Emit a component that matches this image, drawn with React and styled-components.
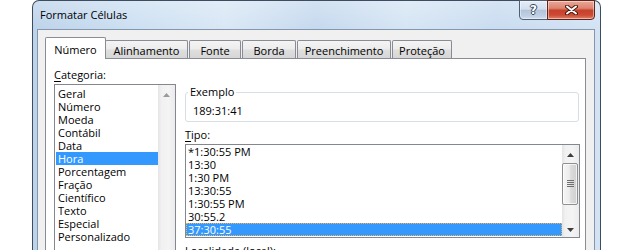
import React from "react";
import styled, { createGlobalStyle, css } from "styled-components";

const GlobalStyle = createGlobalStyle`
  html, body { margin: 0; padding: 0; background: #fff; overflow: hidden; }
  body {
    font-family: "Open Sans", "Noto Sans", sans-serif;
    font-size: 11px;
    color: #000;
  }
  * { box-sizing: border-box; }
`;

const Screen = styled.div`
  width: 630px;
  height: 250px;
  overflow: hidden;
  padding-left: 32px;
`;

const Window = styled.div`
  width: 569px;
  height: 290px;
  border: 1px solid #3d4c5e;
  border-bottom: none;
  border-radius: 7px 7px 0 0;
  padding: 0 5px 0 4px;
  display: flex;
  flex-direction: column;
  background:
    linear-gradient(180deg, rgba(255,255,255,0.25) 0px, rgba(255,255,255,0) 28px),
    linear-gradient(90deg, #bdd3ea 0%, #cde0f2 18%, #d9e7f5 34%, #c5d9ee 50%, #d6e5f4 66%, #c9dcf0 82%, #d3e3f4 100%);
`;

const TitleBar = styled.div`
  height: 28px;
  display: flex;
  justify-content: space-between;
  align-items: flex-start;
`;

const Title = styled.div`
  margin-left: 3px;
  line-height: 28px;
  font-size: 11px;
  color: #000;
`;

const CaptionGroup = styled.div`
  display: flex;
  margin-top: -1px;
`;

const CaptionButton = styled.div`
  height: 20px;
  width: ${(p) => p.$w}px;
  border: 1px solid;
  display: flex;
  align-items: center;
  justify-content: center;
  box-shadow: inset 0 0 0 1px rgba(255, 255, 255, 0.45);
  ${(p) =>
    p.$kind === "close"
      ? css`
          margin-left: -1px;
          border-color: #5e2219;
          border-radius: 0 0 4px 0;
          background: linear-gradient(180deg, #e9a898 0%, #dc8470 40%, #c7412b 52%, #cc4a33 78%, #e0836a 100%);
        `
      : css`
          border-color: #4f5f74;
          border-radius: 0 0 0 4px;
          background: linear-gradient(180deg, #e4ecf6 0%, #d3dfed 45%, #b3c4da 52%, #bfcfe3 80%, #cfdcec 100%);
        `}
`;

const HelpGlyph = styled.span`
  font-family: "DejaVu Sans", sans-serif;
  font-weight: 700;
  font-size: 12px;
  line-height: 12px;
  color: #fff;
  text-shadow: 1px 0 #34465c, -1px 0 #34465c, 0 1px #34465c, 0 -1px #34465c;
`;

const Client = styled.div`
  flex: 1;
  border: 1px solid #8596ad;
  border-bottom: none;
  background: #f0f0f0;
  padding: 0 8px 0 7px;
  display: flex;
  flex-direction: column;
`;

const TabStrip = styled.div`
  height: 28px;
  display: flex;
  align-items: flex-end;
`;

const Tab = styled.div`
  width: ${(p) => p.$w}px;
  margin-left: ${(p) => p.$ml}px;
  border: 1px solid #898c95;
  border-bottom: none;
  border-radius: 2px 2px 0 0;
  display: flex;
  align-items: center;
  justify-content: center;
  padding-top: 1px;
  position: relative;
  white-space: nowrap;
  ${(p) =>
    p.$active
      ? css`
          height: 22px;
          margin-bottom: -1px;
          background: #fff;
          z-index: 2;
        `
      : css`
          height: 18px;
          background: linear-gradient(180deg, #f4f4f4 0%, #ececec 48%, #dfdfdf 52%, #d6d6d6 100%);
          z-index: 0;
        `}
`;

const Panel = styled.div`
  flex: 1;
  position: relative;
  z-index: 1;
  border: 1px solid #898c95;
  border-bottom: none;
  background: #fff;
  display: flex;
  gap: 9px;
  padding: 8px 0 0 8px;
`;

const Column = styled.div`
  width: ${(p) => p.$w}px;
  display: flex;
  flex-direction: column;
`;

const FieldLabel = styled.div`
  height: 15px;
  line-height: 15px;
  margin-top: ${(p) => p.$mt || 0}px;
  margin-bottom: 2px;
  white-space: nowrap;
`;

const Key = styled.span`
  text-decoration: underline;
  text-underline-offset: 2px;
`;

const ListBox = styled.div`
  height: ${(p) => p.$h}px;
  flex: none;
  border: 1px solid #828790;
  background: #fff;
  display: flex;
`;

const Items = styled.div`
  flex: 1;
  padding-top: ${(p) => p.$pt}px;
  display: flex;
  flex-direction: column;
`;

const Item = styled.div`
  height: 13px;
  line-height: 13px;
  margin-left: ${(p) => p.$inset}px;
  padding-left: 2px;
  white-space: nowrap;
  ${(p) =>
    p.$selected &&
    css`
      background: #3399ff;
      color: #fff;
    `}
  ${(p) =>
    p.$focus &&
    css`
      outline: 1px dotted #f3b24a;
      outline-offset: -1px;
    `}
`;

const ScrollBar = styled.div`
  width: 17px;
  flex: none;
  display: flex;
  flex-direction: column;
  background: linear-gradient(90deg, #e4e4e4 0%, #f1f1f1 20%, #f4f4f4 60%, #ebebeb 100%);
`;

const ScrollButton = styled.div`
  height: 17px;
  flex: none;
  display: flex;
  align-items: center;
  justify-content: center;
  padding-top: 2px;
`;

const Track = styled.div`
  flex: 1;
  display: flex;
  flex-direction: column;
  padding: 1px 1px 0 0;
`;

const Thumb = styled.div`
  height: 42px;
  border: 1px solid #8e8f8f;
  border-radius: 2px;
  background: linear-gradient(90deg, #f6f6f6 0%, #ececec 45%, #dcdcdc 55%, #d0d0d0 100%);
  box-shadow: inset 0 0 0 1px rgba(255, 255, 255, 0.7);
  display: flex;
  align-items: center;
  justify-content: center;
`;

const GroupBox = styled.fieldset`
  margin: 18px 0 0 0;
  padding: 0;
  width: 394px;
  min-inline-size: 0;
  border: 1px solid #d5dfe5;
  border-radius: 3px;
`;

const Legend = styled.legend`
  margin-left: 2px;
  padding: 0 2px;
  line-height: 14px;
  font-size: 11px;
`;

const Sample = styled.div`
  padding: 4px 0 3px 7px;
  line-height: 15px;
`;

const Arrow = ({ down, color }) => (
  <svg width="7" height="4" viewBox="0 0 7 4">
    <polygon points={down ? "0,0 7,0 3.5,4" : "3.5,0 7,4 0,4"} fill={color} />
  </svg>
);

const Grip = () => (
  <svg width="7" height="8" viewBox="0 0 7 8">
    {[0, 2, 4, 6].map((y) => (
      <g key={y}>
        <rect x="0" y={y} width="7" height="1" fill="#6f6f6f" />
      </g>
    ))}
  </svg>
);

const CloseGlyph = () => (
  <svg width="13" height="10" viewBox="0 0 13 10">
    <path d="M2 1.5 L11 8.5 M11 1.5 L2 8.5" stroke="#4a1a12" strokeWidth="4" strokeLinecap="round" fill="none" />
    <path d="M2 1.5 L11 8.5 M11 1.5 L2 8.5" stroke="#ffffff" strokeWidth="2" strokeLinecap="round" fill="none" />
  </svg>
);

const tabs = [
  { label: "Número", w: 61, ml: 0, active: true },
  { label: "Alinhamento", w: 83, ml: -1 },
  { label: "Fonte", w: 52, ml: 1 },
  { label: "Borda", w: 54, ml: 1 },
  { label: "Preenchimento", w: 94, ml: 1 },
  { label: "Proteção", w: 60, ml: 1 },
];

const categories = [
  "Geral", "Número", "Moeda", "Contábil", "Data", "Hora", "Porcentagem",
  "Fração", "Científico", "Texto", "Especial", "Personalizado",
];

const types = [
  "*1:30:55 PM", "13:30", "1:30 PM", "13:30:55", "1:30:55 PM", "30:55.2", "37:30:55",
];

export default function App() {
  return (
    <>
      <GlobalStyle />
      <Screen>
        <Window>
          <TitleBar>
            <Title>Formatar Células</Title>
            <CaptionGroup>
              <CaptionButton $kind="help" $w={29}>
                <HelpGlyph>?</HelpGlyph>
              </CaptionButton>
              <CaptionButton $kind="close" $w={48}>
                <CloseGlyph />
              </CaptionButton>
            </CaptionGroup>
          </TitleBar>
          <Client>
            <TabStrip>
              {tabs.map((t) => (
                <Tab key={t.label} $w={t.w} $ml={t.ml} $active={t.active}>
                  {t.label}
                </Tab>
              ))}
            </TabStrip>
            <Panel>
              <Column $w={122}>
                <FieldLabel>
                  <Key>C</Key>ategoria:
                </FieldLabel>
                <ListBox $h={190}>
                  <Items $pt={2}>
                    {categories.map((c) => (
                      <Item key={c} $inset={1} $selected={c === "Hora"}>
                        {c}
                      </Item>
                    ))}
                  </Items>
                  <ScrollBar>
                    <ScrollButton>
                      <Arrow color="#9a9a9a" />
                    </ScrollButton>
                  </ScrollBar>
                </ListBox>
              </Column>
              <Column $w={395}>
                <GroupBox>
                  <Legend>Exemplo</Legend>
                  <Sample>189:31:41</Sample>
                </GroupBox>
                <FieldLabel $mt={5}>
                  <Key>T</Key>ipo:
                </FieldLabel>
                <ListBox $h={94}>
                  <Items $pt={0}>
                    {types.map((t) => (
                      <Item
                        key={t}
                        $inset={0}
                        $selected={t === "37:30:55"}
                        $focus={t === "37:30:55"}
                      >
                        {t}
                      </Item>
                    ))}
                  </Items>
                  <ScrollBar>
                    <ScrollButton>
                      <Arrow color="#3d3d3d" />
                    </ScrollButton>
                    <Track>
                      <Thumb>
                        <Grip />
                      </Thumb>
                    </Track>
                    <ScrollButton>
                      <Arrow down color="#3d3d3d" />
                    </ScrollButton>
                  </ScrollBar>
                </ListBox>
                <FieldLabel $mt={5}>Localidade (local):</FieldLabel>
              </Column>
            </Panel>
          </Client>
        </Window>
      </Screen>
    </>
  );
}
